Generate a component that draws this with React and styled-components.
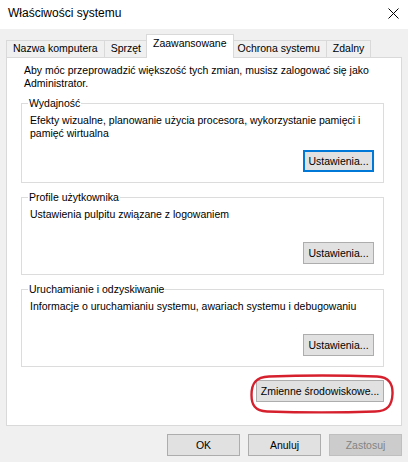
import React from "react";
import styled, { createGlobalStyle } from "styled-components";

const Global = createGlobalStyle`
  html, body {
    margin: 0;
    padding: 0;
    background: #f0f0f0;
  }
  body {
    font-family: "Liberation Sans", Arial, sans-serif;
    font-size: 10.5px;
    color: #000;
  }
`;

const groups = [
  {
    title: "Wydajność",
    text: "Efekty wizualne, planowanie użycia procesora, wykorzystanie pamięci i pamięć wirtualna",
    height: 58,
    focused: true,
  },
  {
    title: "Profile użytkownika",
    text: "Ustawienia pulpitu związane z logowaniem",
    height: 56,
  },
  {
    title: "Uruchamianie i odzyskiwanie",
    text: "Informacje o uruchamianiu systemu, awariach systemu i debugowaniu",
    height: 56,
  },
];

const tabs = ["Nazwa komputera", "Sprzęt", "Zaawansowane", "Ochrona systemu", "Zdalny"];

const SystemProperties = () => {
  return (
    <Window>
      <Global />
      <TitleBar>
        <span>Właściwości systemu</span>
        <Close>
          <svg width="11" height="11" viewBox="0 0 11 11">
            <path d="M0.5 0.5 L10.5 10.5 M10.5 0.5 L0.5 10.5" stroke="#000" strokeWidth="1" />
          </svg>
        </Close>
      </TitleBar>
      <Body>
        <TabStrip>
          {tabs.map((t) => (
            <Tab key={t} $active={t === "Zaawansowane"}>{t}</Tab>
          ))}
        </TabStrip>
        <Panel>
          <Intro>
            Aby móc przeprowadzić większość tych zmian, musisz zalogować się jako Administrator.
          </Intro>
          {groups.map((g) => (
            <Group key={g.title}>
              <legend>{g.title}</legend>
              <GroupBody $h={g.height}>
                <p>{g.text}</p>
                <Button $focused={g.focused}>Ustawienia...</Button>
              </GroupBody>
            </Group>
          ))}
          <EnvRow>
            <Marked>
              <Button $w={128}>Zmienne środowiskowe...</Button>
              <Circle width="146" height="40" viewBox="0 0 146 40">
                <path
                  d="M20 2.5 C60 1 100 1.5 128 2.5 C140 3 144 10 143.5 20 C143 31 139 37 126 37.5 C95 38.5 50 38.5 18 37.5 C6 37 2.5 31 2.5 21 C2.5 9 7 3 20 2.5 Z"
                  fill="none"
                  stroke="#d6202e"
                  strokeWidth="2.4"
                />
              </Circle>
            </Marked>
          </EnvRow>
        </Panel>
        <Footer>
          <Button $w={73}>OK</Button>
          <Button $w={73}>Anuluj</Button>
          <Button $w={73} disabled>Zastosuj</Button>
        </Footer>
      </Body>
    </Window>
  );
};

export default SystemProperties;

const Window = styled.div`
  width: 408px;
  height: 462px;
  overflow: hidden;
  background: #f0f0f0;
  display: flex;
  flex-direction: column;
`;

const TitleBar = styled.div`
  height: 29px;
  flex: none;
  background: #ffffff;
  display: flex;
  align-items: center;
  justify-content: space-between;
  padding: 0 9px 3px 8px;
  box-sizing: border-box;
  font-size: 12px;
`;

const Close = styled.div`
  display: flex;
  align-items: center;
  margin-top: 1px;
`;

const Body = styled.div`
  padding: 5px 6px 0 6px;
  display: flex;
  flex-direction: column;
`;

const TabStrip = styled.div`
  display: flex;
  align-items: flex-end;
  height: 23px;
`;

const Tab = styled.div`
  position: relative;
  box-sizing: border-box;
  height: ${(p) => (p.$active ? "24px" : "17px")};
  margin-bottom: ${(p) => (p.$active ? "-1px" : "0")};
  margin-left: ${(p) => (p.$active ? "-2px" : "-1px")};
  margin-right: ${(p) => (p.$active ? "-2px" : "0")};
  padding: ${(p) => (p.$active ? "2px 6px 0" : "1px 6px 0")};
  border: 1px solid #d9d9d9;
  border-bottom: none;
  background: ${(p) => (p.$active ? "#ffffff" : "#f0f0f0")};
  z-index: ${(p) => (p.$active ? 2 : 1)};
  line-height: 13px;
  white-space: nowrap;
  &:first-child {
    margin-left: 0;
  }
`;

const Panel = styled.div`
  box-sizing: border-box;
  height: 369px;
  background: #ffffff;
  border: 1px solid #d9d9d9;
  padding: 6px 17px 0 14px;
  display: flex;
  flex-direction: column;
`;

const Intro = styled.p`
  margin: 0 0 0 3px;
  line-height: 13px;
  padding-right: 4px;
`;

const Group = styled.fieldset`
  margin: 7px 0 0;
  min-width: 0;
  border: 1px solid #dcdcdc;
  padding: 4px 9px 10px 6px;

  & + & {
    margin-top: 8px;
  }

  legend {
    padding: 0 1px;
    line-height: 13px;
  }
`;

const GroupBody = styled.div`
  height: ${(p) => p.$h}px;
  display: flex;
  flex-direction: column;
  align-items: flex-end;

  p {
    align-self: stretch;
    margin: 0 0 0 2px;
    line-height: 13px;
  }
`;

const Button = styled.button`
  box-sizing: border-box;
  width: ${(p) => p.$w || 71}px;
  height: 22px;
  margin-top: auto;
  padding: 0;
  font-family: "Liberation Sans", Arial, sans-serif;
  font-size: 10.5px;
  color: #000;
  background: #e1e1e1;
  border: ${(p) => (p.$focused ? "2px solid #0078d7" : "1px solid #adadad")};

  &:disabled {
    background: #cccccc;
    border-color: #bfbfbf;
    color: #838383;
  }
`;

const EnvRow = styled.div`
  display: flex;
  justify-content: flex-end;
  margin-top: 13px;
`;

const Marked = styled.div`
  position: relative;
  display: flex;
`;

const Circle = styled.svg`
  position: absolute;
  left: -7px;
  top: -6px;
  pointer-events: none;
`;

const Footer = styled.div`
  display: flex;
  justify-content: flex-end;
  gap: 8px;
  margin-top: 8px;
`;
